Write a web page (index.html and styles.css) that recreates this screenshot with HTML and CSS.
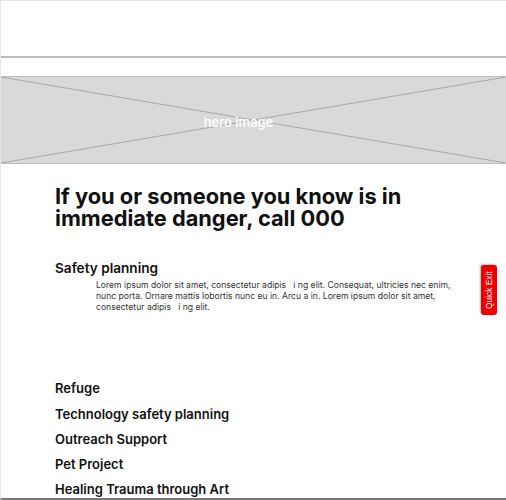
FILE: index.html
```html
<!DOCTYPE html>
<html>
<head>
<meta charset="utf-8">
<link rel="stylesheet" href="styles.css">
</head>
<body>
<div class="page">
  <header class="topbar"></header>
  <div class="hero">
    <svg class="hero-x" viewBox="0 0 506 88" preserveAspectRatio="none">
      <line x1="0" y1="0" x2="506" y2="88" stroke="#a8a8a8" stroke-width="1"/>
      <line x1="0" y1="88" x2="506" y2="0" stroke="#a8a8a8" stroke-width="1"/>
    </svg>
    <span class="hero-label">hero image</span>
  </div>
  <main class="content">
    <h1 class="title">If you or someone you know is in immediate danger, call 000</h1>
    <section class="section">
      <h2 class="section-title">Safety planning</h2>
      <p class="section-text">Lorem ipsum dolor sit amet, consectetur adipis&nbsp;&nbsp;&nbsp;i ng elit. Consequat, ultricies nec enim, nunc porta. Ornare mattis lobortis nunc eu in. Arcu a in. Lorem ipsum dolor sit amet, consectetur adipis&nbsp;&nbsp;&nbsp;i ng elit.</p>
    </section>
    <ul class="links">
      <li class="link first">Refuge</li>
      <li class="link">Technology safety planning</li>
      <li class="link">Outreach Support</li>
      <li class="link">Pet Project</li>
      <li class="link">Healing Trauma through Art</li>
    </ul>
  </main>
  <a class="quick-exit">Quick Exit</a>
</div>
</body>
</html>
```

FILE: styles.css
```css
* { box-sizing: border-box; }
html, body { margin: 0; padding: 0; background: #fff; }
body { font-family: Inter, "Noto Sans", sans-serif; color: #111; }
.page {
  position: relative;
  height: 500px;
  overflow: hidden;
  border-top: 1px solid #e6e6e6;
  border-left: 1px solid #e6e6e6;
  border-bottom: 2px solid #7a7a7a;
}
.topbar {
  height: 57px;
  border-bottom: 2px solid #bdbdbd;
}
.hero {
  margin-top: 18px;
  margin-left: -1px;
  height: 88px;
  background: #d9d9d9;
  border-top: 1px solid #bdbdbd;
  border-bottom: 1px solid #bdbdbd;
  border-left: 1px solid #9a9a9a;
  display: grid;
  place-items: center;
}
.hero-x, .hero-label { grid-area: 1 / 1; }
.hero-x { width: 100%; height: 100%; display: block; }
.hero-label {
  color: #fff;
  font-size: 13px;
  font-weight: 500;
  margin-left: -30px;
  margin-top: 4px;
}
.content { padding-left: 54px; }
.title {
  margin: 21px 0 0;
  font-size: 21.8px;
  line-height: 22px;
  font-weight: 700;
  width: 380px;
}
.section { margin-top: 31px; }
.section-title {
  margin: 0;
  font-size: 13.6px;
  line-height: 17px;
  font-weight: 600;
}
.section-text {
  margin: 3px 0 0 41px;
  width: 360px;
  font-size: 8.6px;
  line-height: 11px;
  color: #333;
}
.links { list-style: none; margin: 67px 0 0; padding: 0; }
.link {
  font-size: 13px;
  line-height: 17px;
  font-weight: 600;
  margin-bottom: 8px;
}
.link.first { margin-bottom: 9px; }
.quick-exit {
  position: absolute;
  right: 9px;
  top: 264px;
  width: 16px;
  height: 50px;
  background: #ee0000;
  border-radius: 3px;
  box-shadow: 1px 1px 2px rgba(0,0,0,0.3);
  color: #fff;
  font-size: 8.4px;
  writing-mode: vertical-rl;
  transform: rotate(180deg);
  display: flex;
  align-items: center;
  justify-content: center;
  font-family: "Liberation Sans", Arial, sans-serif;
}
```
